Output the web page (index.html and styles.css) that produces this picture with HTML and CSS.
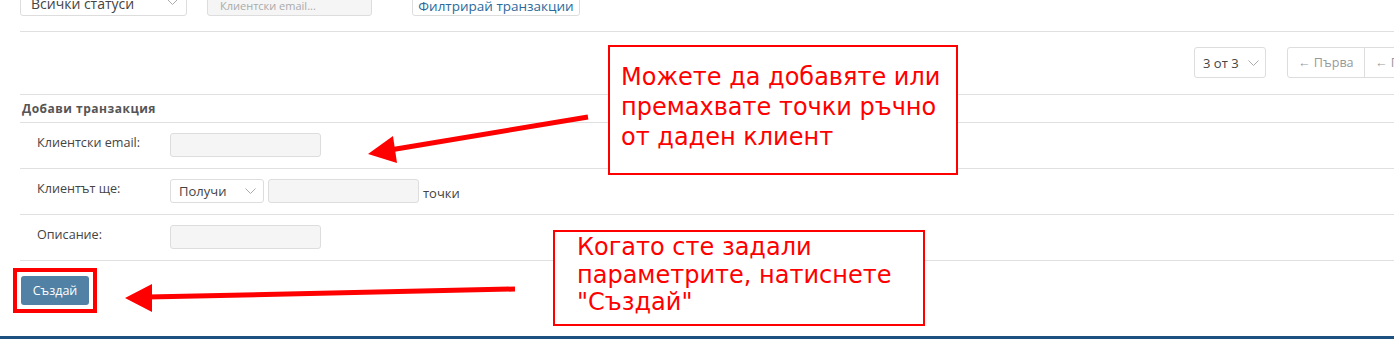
FILE: index.html
```html
<!DOCTYPE html>
<html lang="bg">
<head>
<meta charset="utf-8">
<title>Транзакции</title>
<link rel="stylesheet" href="styles.css">
</head>
<body>
<div class="page">
  <div class="filters">
    <div class="select select-status">
      <span>Всички статуси</span>
      <svg class="chev chev-top" width="11" height="6" viewBox="0 0 11 6"><polyline points="0.5,0.5 5.5,5.5 10.5,0.5" fill="none" stroke="#aaa" stroke-width="1"/></svg>
    </div>
    <div class="input input-filter">Клиентски email...</div>
    <div class="btn-filter">Филтрирай транзакции</div>
  </div>

  <div class="pager">
    <div class="select select-page">
      <span>3 от 3</span>
      <svg class="chev" width="11" height="6" viewBox="0 0 11 6"><polyline points="0.5,0.5 5.5,5.5 10.5,0.5" fill="none" stroke="#aaa" stroke-width="1"/></svg>
    </div>
    <div class="pages">
      <span class="page-btn">← Първа</span>
      <span class="page-btn">← Предишна</span>
      <span class="page-btn">Следваща →</span>
    </div>
  </div>

  <div class="section-title">Добави транзакция</div>

  <div class="form-row">
    <div class="label">Клиентски email:</div>
    <div class="field"><div class="input input-md"></div></div>
  </div>
  <div class="form-row">
    <div class="label">Клиентът ще:</div>
    <div class="field">
      <div class="select select-small">
        <span>Получи</span>
        <svg class="chev" width="11" height="6" viewBox="0 0 11 6"><polyline points="0.5,0.5 5.5,5.5 10.5,0.5" fill="none" stroke="#aaa" stroke-width="1"/></svg>
      </div>
      <div class="input input-md"></div>
      <span class="unit">точки</span>
    </div>
  </div>
  <div class="form-row">
    <div class="label">Описание:</div>
    <div class="field"><div class="input input-md"></div></div>
  </div>

  <div class="actions">
    <div class="btn-wrap"><button class="btn-create">Създай</button></div>
  </div>
</div>
<div class="footer-bar"></div>

<div class="note note-1">Можете да добавяте или премахвате точки ръчно от даден клиент</div>
<div class="note note-2">Когато сте задали параметрите, натиснете "Създай"</div>

<svg class="arrows" width="1394" height="339" viewBox="0 0 1394 339">
  <line x1="588" y1="117" x2="390" y2="150" stroke="#ff0000" stroke-width="5"/>
  <polygon points="368,154 393,136 397,163" fill="#ff0000"/>
  <line x1="515" y1="289" x2="148" y2="297" stroke="#ff0000" stroke-width="5"/>
  <polygon points="125,298 152,284 152,312" fill="#ff0000"/>
</svg>
</body>
</html>
```

FILE: styles.css
```css
html, body {
  margin: 0;
  padding: 0;
}
body {
  position: relative;
  width: 1394px;
  height: 339px;
  overflow: hidden;
  background: #fff;
  font-family: "Open Sans", "Liberation Sans", sans-serif;
  color: #444;
}
.page {
  margin-left: 20px;
}
.filters {
  display: flex;
  align-items: flex-start;
  margin-top: -15px;
  padding-bottom: 15px;
  border-bottom: 1px solid #e0e0e0;
}
.select {
  box-sizing: border-box;
  display: flex;
  align-items: center;
  justify-content: space-between;
  background: #fff;
  border: 1px solid #ddd;
  border-radius: 3px;
  font-size: 13px;
  color: #444;
}
.select-status {
  width: 167px;
  height: 31px;
  padding: 0 8px 2px 10px;
  align-items: flex-end;
  font-size: 14px;
  line-height: 18px;
}
.chev-top {
  margin-bottom: 8px;
}
.input {
  box-sizing: border-box;
  background: #f5f5f5;
  border: 1px solid #ddd;
  border-radius: 3px;
}
.input-filter {
  width: 165px;
  height: 31px;
  margin-left: 20px;
  padding: 13px 0 0 12px;
  font-size: 11px;
  line-height: 14px;
  color: #aaa;
}
.btn-filter {
  box-sizing: border-box;
  width: 168px;
  height: 31px;
  margin-left: 40px;
  padding-top: 11px;
  border: 1px solid #ddd;
  border-radius: 3px;
  background: #fff;
  font-size: 13.5px;
  line-height: 18px;
  color: #2b6a9c;
  text-align: center;
}
.pager {
  display: flex;
  align-items: center;
  padding: 15px 0 16px 1174px;
  border-bottom: 1px solid #e0e0e0;
  white-space: nowrap;
}
.select-page {
  width: 72px;
  height: 31px;
  padding: 0 6px 0 8px;
  flex: none;
}
.pages {
  display: flex;
  margin-left: 21px;
  border: 1px solid #ddd;
  border-radius: 3px;
  flex: none;
}
.page-btn {
  box-sizing: border-box;
  height: 29px;
  line-height: 29px;
  padding: 0 10px;
  font-size: 12.6px;
  color: #999;
  border-left: 1px solid #ddd;
}
.page-btn:first-child {
  border-left: none;
  width: 76px;
}
.section-title {
  height: 27px;
  line-height: 27px;
  padding-left: 2px;
  font-size: 12px;
  font-weight: bold;
  letter-spacing: 0.5px;
  color: #555;
  border-bottom: 1px solid #e0e0e0;
}
.form-row {
  display: flex;
  align-items: flex-start;
  box-sizing: border-box;
  height: 46px;
  padding-top: 10px;
  border-bottom: 1px solid #e0e0e0;
}
.label {
  width: 133px;
  padding-left: 17px;
  padding-top: 1px;
  font-size: 12.6px;
  line-height: 18px;
  color: #444;
}
.field {
  display: flex;
  align-items: center;
  gap: 4px;
}
.input-md {
  width: 151px;
  height: 24px;
}
.select-small {
  width: 94px;
  height: 24px;
  padding: 0 7px 0 8px;
}
.unit {
  font-size: 13px;
  color: #444;
  margin-top: 3px;
}
.actions {
  padding: 15px 0 31px 1px;
}
.btn-wrap {
  position: relative;
  display: inline-block;
  vertical-align: top;
}
.btn-wrap::after {
  content: "";
  position: absolute;
  inset: -8px;
  border: 4px solid #ff0000;
}
.btn-create {
  display: block;
  width: 68px;
  height: 29px;
  margin: 0;
  padding: 0;
  border: none;
  border-radius: 3px;
  background: #5181a5;
  color: #fff;
  font-family: "Open Sans", "Liberation Sans", sans-serif;
  font-size: 12.5px;
}
.footer-bar {
  height: 4px;
  background: #1d5180;
}
.note {
  position: absolute;
  box-sizing: border-box;
  border: 2px solid #ff0000;
  background: #fff;
  color: #ff0000;
  font-family: "DejaVu Sans", sans-serif;
  font-size: 24px;
}
.note-1 {
  left: 608px;
  top: 45px;
  width: 350px;
  height: 130px;
  padding: 15px 0 0 11px;
  line-height: 30px;
}
.note-2 {
  left: 553px;
  top: 230px;
  width: 372px;
  height: 96px;
  padding: 2px 0 0 22px;
  line-height: 27.5px;
}
.arrows {
  position: absolute;
  left: 0;
  top: 0;
  pointer-events: none;
}
```
